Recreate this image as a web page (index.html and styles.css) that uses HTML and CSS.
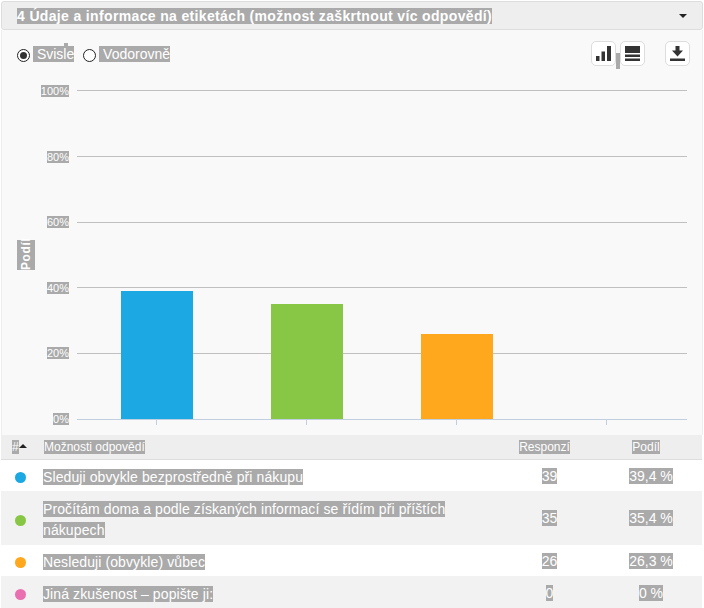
FILE: index.html
```html
<!DOCTYPE html>
<html lang="cs">
<head>
<meta charset="utf-8">
<title>Údaje a informace na etiketách</title>
<link rel="stylesheet" href="styles.css">
</head>
<body>
<div class="page">
  <div class="head">
    <span class="sel title">4 Údaje a informace na etiketách (možnost zaškrtnout víc odpovědí)</span>
    <span class="caret"></span>
  </div>
  <div class="panel">
    <div class="toolbar">
      <span class="radio on"></span>
      <span class="sel opt first">&nbsp;Svisle</span>
      <span class="radio second"></span>
      <span class="sel opt">&nbsp;Vodorovně</span>
      <div class="tools">
        <span class="btn"><svg width="15" height="15" viewBox="0 0 15 15"><path fill="#333" d="M0 10h3.500v5H0zM5.500 5.500h3.500V15H5.500zM11 0h4v15h-4z"/></svg></span>
        <span class="sliver"></span>
        <span class="btn"><svg width="15" height="15" viewBox="0 0 15 15"><path fill="#333" d="M0 0h15v7H0zM0 8.500h15V11H0zM0 12.500h15V15H0z"/></svg></span>
        <span class="btn last"><svg width="15" height="15" viewBox="0 0 15 15"><path fill="#333" d="M5.500 0h4v4.500H13l-5.500 6-5.500-6h3.500zM0 12.500h15V15H0z"/></svg></span>
      </div>
    </div>
    <div class="chart">
      <div class="axis-title"><span class="sel vert">Podíl</span></div>
      <div class="labels">
        <span><span class="sel">100%</span></span>
        <span><span class="sel">80%</span></span>
        <span><span class="sel">60%</span></span>
        <span><span class="sel">40%</span></span>
        <span><span class="sel">20%</span></span>
        <span><span class="sel">0%</span></span>
      </div>
      <div class="plot">
        <div class="lines">
          <i></i><i></i><i></i><i></i><i></i><i class="base"></i>
        </div>
        <div class="bars">
          <div class="cat"><b class="bar c1" style="height:128px"></b></div>
          <div class="cat"><b class="bar c2" style="height:115px"></b></div>
          <div class="cat"><b class="bar c3" style="height:85px"></b></div>
          <div class="cat"></div>
        </div>
      </div>
    </div>
  </div>
  <table class="grid">
    <thead>
      <tr>
        <th class="n"><span class="sel">#</span><span class="sort"></span></th>
        <th class="t"><span class="sel">Možnosti odpovědí</span></th>
        <th class="r"><span class="sel">Responzí</span></th>
        <th class="p"><span class="sel">Podíl</span></th>
      </tr>
    </thead>
    <tbody>
      <tr>
        <td class="n"><span class="dot c1"></span></td>
        <td class="t"><span class="sel">Sleduji obvykle bezprostředně při nákupu</span></td>
        <td class="r"><span class="sel">39</span></td>
        <td class="p"><span class="sel">39,4 %</span></td>
      </tr>
      <tr class="alt">
        <td class="n"><span class="dot c2"></span></td>
        <td class="t"><span class="sel">Pročítám doma a podle získaných informací se řídím při příštích <br>nákupech</span></td>
        <td class="r"><span class="sel">35</span></td>
        <td class="p"><span class="sel">35,4 %</span></td>
      </tr>
      <tr>
        <td class="n"><span class="dot c3"></span></td>
        <td class="t"><span class="sel">Nesleduji (obvykle) vůbec</span></td>
        <td class="r"><span class="sel">26</span></td>
        <td class="p"><span class="sel">26,3 %</span></td>
      </tr>
      <tr class="alt">
        <td class="n"><span class="dot c4"></span></td>
        <td class="t"><span class="sel">Jiná zkušenost – popište ji:</span></td>
        <td class="r"><span class="sel">0</span></td>
        <td class="p"><span class="sel">0 %</span></td>
      </tr>
    </tbody>
  </table>
</div>
</body>
</html>
```
FILE: styles.css
```css
* { box-sizing: border-box; }
html, body { margin: 0; padding: 0; background: #fff; }
body { font-family: "Liberation Sans", Arial, sans-serif; color: #fff; overflow: hidden; }
.page { width: 702px; height: 608px; margin-left: 1px; padding-top: 1px; overflow: hidden; }
.sel { background: #aaa; color: #fff; }

.head {
  height: 29px;
  display: flex;
  align-items: center;
  justify-content: space-between;
  padding: 0 15px 0 15px;
  background: #eee;
  border: 1px solid #ddd;
  border-radius: 3px;
}
.title { font-size: 14px; font-weight: bold; letter-spacing: 0.35px; line-height: 16px; }
.caret { width: 0; height: 0; border: 4px solid transparent; border-top-color: #222; border-bottom: 0; }

.panel {
  height: 405px;
  background: #f9f9f9;
  border-left: 1px solid #eee;
  border-right: 1px solid #eee;
}
.toolbar {
  height: 53px;
  display: flex;
  align-items: center;
  padding: 0 12px 6px 15px;
}
.radio {
  width: 13px; height: 13px;
  border: 1px solid #222;
  border-radius: 50%;
  background: #fff;
  margin-top: 3px;
  display: flex;
  align-items: center;
  justify-content: center;
}
.radio.on::after { content: ""; width: 7px; height: 7px; border-radius: 50%; background: #333; }
.radio.second { margin-left: 9px; }
.opt { font-size: 14px; line-height: 16px; margin-top: 1px; margin-left: 3px; }
.opt.first { position: relative; }
.opt.first::before {
  content: "";
  position: absolute;
  left: 31px;
  top: -3px;
  width: 4px;
  height: 3px;
  background: #aaa;
}
.tools { margin-left: auto; display: flex; align-items: center; }
.btn {
  width: 25px; height: 25px;
  background: #fff;
  border: 1px solid #ddd;
  border-radius: 5px;
  display: flex;
  align-items: center;
  justify-content: center;
}
.btn.last { margin-left: 20px; }
.sliver { width: 4px; height: 16px; background: #aaa; align-self: flex-end; margin-bottom: -3px; }

.chart { display: flex; height: 344px; padding-left: 15px; }
.axis-title { width: 18px; display: flex; align-items: center; }
.vert {
  writing-mode: vertical-rl;
  transform: rotate(180deg);
  font-size: 12px;
  font-weight: bold;
  letter-spacing: 0.6px;
  line-height: 18px;
  height: 30px;
  text-align: center;
}
.labels {
  width: 34px;
  display: flex;
  flex-direction: column;
  justify-content: space-between;
  align-items: flex-end;
  font-size: 11px;
  line-height: 16px;
}
.labels > span { height: 16px; display: block; }
.plot {
  width: 610px;
  height: 335px;
  margin: 7px 0 0 8px;
  display: grid;
}
.lines, .bars { grid-area: 1 / 1; }
.lines {
  display: flex;
  flex-direction: column;
  justify-content: space-between;
  height: 330px;
}
.lines i { display: block; height: 1px; background: #c0c0c0; }
.lines i.base { background: #c0d0e0; }
.bars { display: flex; padding: 0 5px; height: 335px; }
.cat {
  width: 150px;
  height: 335px;
  padding-bottom: 6px;
  display: flex;
  align-items: flex-end;
  justify-content: center;
  background: linear-gradient(#c0d0e0, #c0d0e0) 74px 100% / 1px 5px no-repeat;
}
.bar { display: block; width: 72px; }
.c1 { background: #1ca8e3; }
.c2 { background: #88c645; }
.c3 { background: #ffa81e; }
.c4 { background: #ea6fb0; }

.grid { width: 701px; border-collapse: collapse; table-layout: fixed; font-size: 14px; }
.grid th {
  height: 24px;
  background: #eee;
  border-bottom: 1px solid #ddd;
  font-size: 12px;
  font-weight: normal;
  line-height: 16px;
  padding: 0;
}
.grid td { padding: 6px 0 4px; line-height: 21px; background: #fff; }
.grid tr.alt td { background: #f2f2f2; }
.grid .n { width: 42px; padding-left: 11px; text-align: left; }
.grid .t { width: 450px; text-align: left; }
.grid td.t { padding: 7px 0 3px; letter-spacing: 0.1px; }
.grid tr.alt td.t { padding: 8px 0 4px; }
.grid th.t { padding-left: 1px; }
.grid .r { width: 113px; text-align: center; }
.grid .p { text-align: center; }
.grid th.r { padding-right: 10px; }
.grid th.p { padding-right: 16px; }
.grid td.p { padding-right: 6px; }
.dot { display: block; width: 11px; height: 11px; border-radius: 50%; margin: 3px 0 0 3px; }
.sort {
  display: inline-block;
  width: 0; height: 0;
  border: 4px solid transparent;
  border-bottom-color: #222;
  border-top: 0;
  vertical-align: 3px;
}
```
